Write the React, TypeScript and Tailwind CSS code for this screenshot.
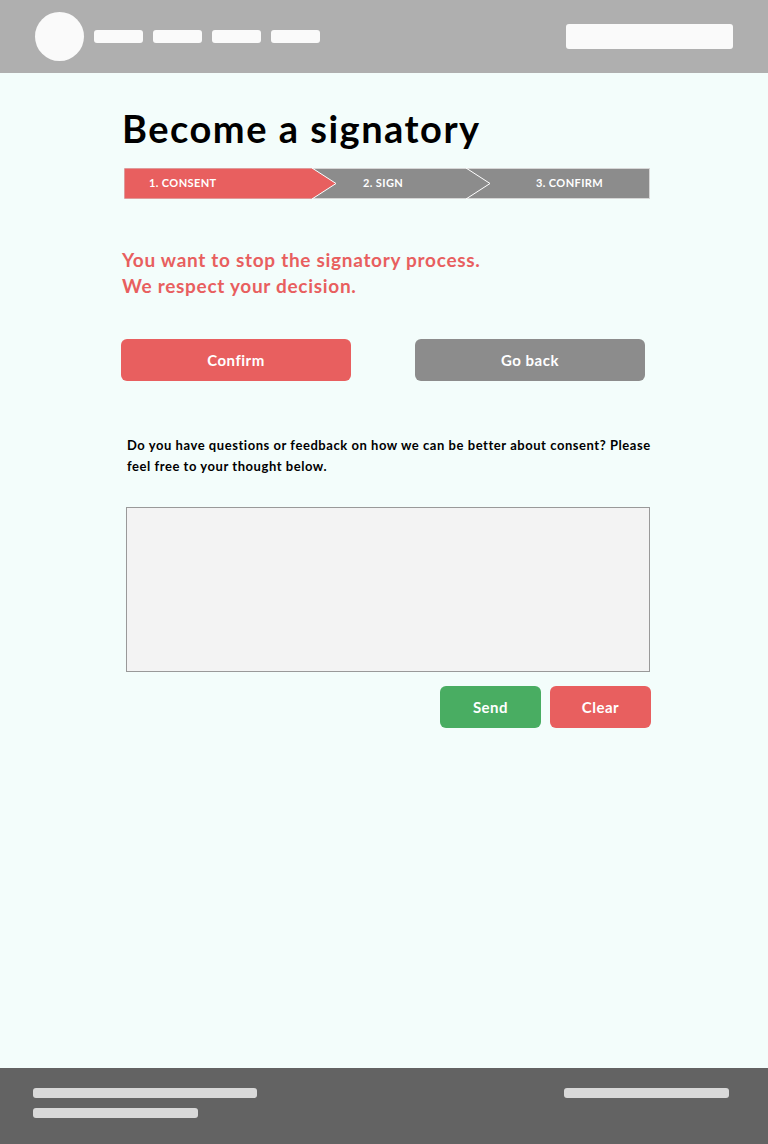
const NAV_PILLS = ["a", "b", "c", "d"];

const STEPS = [
  { label: "1. CONSENT", offset: "w-[239px] pl-[25px]" },
  { label: "2. SIGN", offset: "w-[173px]" },
  { label: "3. CONFIRM", offset: "flex-1" },
];

function Header() {
  return (
    <header className="flex h-[73px] items-center justify-between bg-[#afafaf] pl-[35px] pr-[35px]">
      <div className="flex items-center gap-[10px]">
        <div className="h-[49px] w-[49px] rounded-full bg-[#fafafa]" />
        <div className="flex gap-[10px]">
          {NAV_PILLS.map((id) => (
            <div key={id} className="h-[13px] w-[49px] rounded-[3px] bg-[#fafafa]" />
          ))}
        </div>
      </div>
      <div className="h-[25px] w-[167px] rounded-[3px] bg-[#fafafa]" />
    </header>
  );
}

function Stepper() {
  return (
    <div className="relative ml-[2px] h-[31px] w-[526px]">
      {/* chevron shapes only; labels sit on top as text */}
      <svg className="absolute inset-0" width="526" height="31" viewBox="0 0 526 31">
        <rect x="0.5" y="0.5" width="525" height="30" fill="#8c8c8c" stroke="#d6d6d6" />
        <polygon points="0.5,0.5 188,0.5 212,15.5 188,30.5 0.5,30.5" fill="#e85f5f" />
        <polyline points="188,0 212,15.5 188,31" fill="none" stroke="#ffffff" strokeWidth="1" />
        <polyline points="342,0 366,15.5 342,31" fill="none" stroke="#ffffff" strokeWidth="1" />
      </svg>
      <div className="relative flex h-full items-center text-[11px] font-bold tracking-[0.4px] text-white">
        {STEPS.map((step) => (
          <span key={step.label} className={step.offset}>
            {step.label}
          </span>
        ))}
      </div>
    </div>
  );
}

function Footer() {
  return (
    <footer className="flex h-[76px] justify-between bg-[#636363] px-[33px] pt-[20px]">
      <div className="flex flex-col gap-[10px]">
        <div className="h-[10px] w-[224px] rounded-[3px] bg-[#d9d9d9]" />
        <div className="h-[10px] w-[165px] rounded-[3px] bg-[#d9d9d9]" />
      </div>
      <div className="mr-[6px] h-[10px] w-[165px] rounded-[3px] bg-[#d9d9d9]" />
    </footer>
  );
}

export default function App() {
  return (
    <div
      className="flex min-h-screen flex-col bg-[#f3fdfb]"
      style={{ fontFamily: "Lato, 'Open Sans', sans-serif" }}
    >
      <Header />
      <main className="flex-1 pl-[122px] pt-[32px]">
        <h1 className="text-[38px] font-bold leading-[46px] tracking-[1.5px] text-black">
          Become a signatory
        </h1>
        <div className="mt-[17px]">
          <Stepper />
        </div>

        <p className="mt-[48px] text-[19px] font-bold leading-[26px] tracking-[0.7px] text-[#e85f5f]">
          You want to stop the signatory process.
          <br />
          We respect your decision.
        </p>

        <div className="-ml-[1px] mt-[40px] flex w-[524px] justify-between">
          <button
            type="button"
            className="h-[42px] w-[230px] rounded-[6px] bg-[#e85f5f] text-[15px] font-bold tracking-[0.5px] text-white"
          >
            Confirm
          </button>
          <button
            type="button"
            className="h-[42px] w-[230px] rounded-[6px] bg-[#8c8c8c] text-[15px] font-bold tracking-[0.5px] text-white"
          >
            Go back
          </button>
        </div>

        <p className="mt-[54px] w-[540px] pl-[5px] text-[13px] font-bold leading-[21px] tracking-[0.55px] text-black">
          Do you have questions or feedback on how we can be better about consent? Please feel
          free to your thought below.
        </p>

        <div className="ml-[4px] w-[524px]">
          <textarea className="mt-[30px] block h-[165px] w-full resize-none border border-[#999999] bg-[#f3f3f3] outline-none" />
          <div className="mt-[14px] flex justify-end gap-[9px]">
            <button
              type="button"
              className="h-[42px] w-[101px] rounded-[6px] bg-[#49ad62] text-[15px] font-bold tracking-[0.5px] text-white"
            >
              Send
            </button>
            <button
              type="button"
              className="-mr-[1px] h-[42px] w-[101px] rounded-[6px] bg-[#e85f5f] text-[15px] font-bold tracking-[0.5px] text-white"
            >
              Clear
            </button>
          </div>
        </div>
      </main>
      <Footer />
    </div>
  );
}
